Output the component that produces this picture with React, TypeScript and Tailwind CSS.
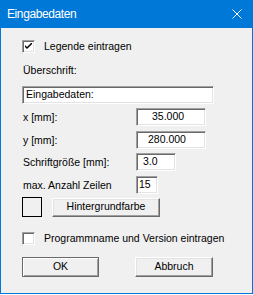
import React from "react"

const sunken =
  "border border-t-[#a0a0a0] border-l-[#a0a0a0] border-r-white border-b-white bg-white shadow-[inset_1px_1px_0_#696969,inset_-1px_-1px_0_#e3e3e3]"

const raised =
  "border border-t-white border-l-white border-r-[#696969] border-b-[#696969] bg-[#f0f0f0] shadow-[inset_-1px_-1px_0_#a0a0a0,inset_1px_1px_0_#e3e3e3]"

function CheckBox({ checked }: { checked?: boolean }) {
  return (
    <div className={`${sunken} w-[13px] h-[13px] flex items-center justify-center shrink-0`}>
      {checked && (
        <svg width="7" height="7" viewBox="0 0 7 7">
          <path d="M0 2 L0 4 L2 6 L7 1 L7 -1 L2 4 Z" fill="#000" />
        </svg>
      )}
    </div>
  )
}

function FieldRow({
  label,
  value,
  mt,
  box,
}: {
  label: string
  value: string
  mt: string
  box: string
}) {
  return (
    <div className={`flex items-center ${mt}`}>
      <div className="w-[114px] pl-[1px] leading-[13px]">{label}</div>
      <div className={`${sunken} h-[18px] flex items-center ${box}`}>{value}</div>
    </div>
  )
}

export default function App() {
  return (
    <div
      className="w-[253px] h-[295px] bg-white text-black"
      style={{ fontFamily: '"Liberation Sans", Arial, sans-serif' }}
    >
      {/* title bar */}
      <div className="h-[28px] bg-[#0078d7] flex items-center justify-between pl-[7px] pr-[11px]">
        <span className="text-white text-[12px] tracking-[-0.4px] leading-none">Eingabedaten</span>
        <svg width="10" height="10" viewBox="0 0 10 10">
          <path d="M0.5 0.5 L9.5 9.5 M9.5 0.5 L0.5 9.5" stroke="#fff" strokeWidth="1" />
        </svg>
      </div>

      {/* body */}
      <div className="h-[266px] border-x border-b border-[#0078d7] bg-[#f0f0f0] pl-[21px] text-[10.5px] flex flex-col">
        <div className="flex items-center gap-[9px] mt-[12px]">
          <CheckBox checked />
          <span className="leading-[13px]">Legende eintragen</span>
        </div>

        <div className="mt-[11px] pl-[1px] leading-[13px]">Überschrift:</div>

        <div className={`${sunken} mt-[9px] w-[192px] h-[18px] flex items-center pl-[3px]`}>Eingabedaten:</div>

        <FieldRow label="x [mm]:" value="35.000" mt="mt-[4px]" box="w-[70px] pl-[15px]" />
        <FieldRow label="y [mm]:" value="280.000" mt="mt-[5px]" box="w-[70px] pl-[11px]" />
        <FieldRow label="Schriftgröße [mm]:" value="3.0" mt="mt-[4px]" box="w-[40px] pl-[6px]" />
        <FieldRow label="max. Anzahl Zeilen" value="15" mt="mt-[5px]" box="w-[22px] pl-[2px]" />

        <div className="flex items-center gap-[10px] mt-[3px]">
          <div className="w-[20px] h-[20px] border border-black bg-[#f0f0f0]" />
          <button className={`${raised} w-[108px] h-[19px] flex items-center justify-center`}>
            Hintergrundfarbe
          </button>
        </div>

        <div className="flex items-center gap-[9px] mt-[15px]">
          <CheckBox />
          <span className="leading-[13px]">Programmname und Version eintragen</span>
        </div>

        <div className="flex mt-[12px]">
          <button className="w-[77px] h-[20px] border border-[#696969] bg-[#f0f0f0] shadow-[inset_1px_1px_0_#ffffff,inset_-1px_-1px_0_#a0a0a0] flex items-center justify-center">
            OK
          </button>
          <button className={`${raised} ml-[36px] w-[78px] h-[20px] flex items-center justify-center`}>
            Abbruch
          </button>
        </div>
      </div>
    </div>
  )
}
